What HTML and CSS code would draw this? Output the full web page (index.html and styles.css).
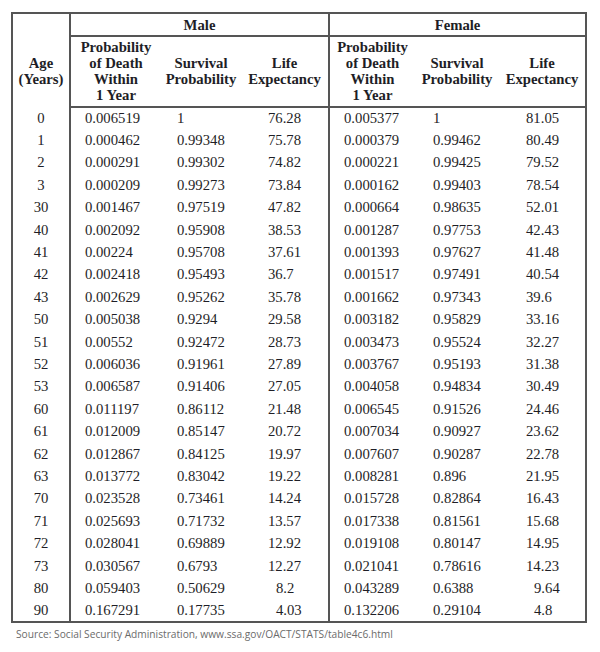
FILE: index.html
```html
<!DOCTYPE html>
<html lang="en">
<head>
<meta charset="utf-8">
<title>Life Table</title>
<link rel="stylesheet" href="styles.css">
</head>
<body>
<div class="page">
<table class="life">
<colgroup>
<col class="c-age"><col class="c-mp"><col class="c-ms"><col class="c-ml"><col class="c-fp"><col class="c-fs"><col class="c-fl">
</colgroup>
<thead>
<tr class="h1">
<th rowspan="2" class="age-h">Age<br>(Years)</th>
<th colspan="3" class="grp male-grp">Male</th>
<th colspan="3" class="grp">Female</th>
</tr>
<tr class="h2">
<th>Probability<br>of Death<br>Within<br>1 Year</th>
<th>Survival<br>Probability</th>
<th class="sep">Life<br>Expectancy</th>
<th>Probability<br>of Death<br>Within<br>1 Year</th>
<th>Survival<br>Probability</th>
<th>Life<br>Expectancy</th>
</tr>
</thead>
<tbody>
<tr><td class="age">0</td><td class="mp">0.006519</td><td class="ms">1</td><td class="ml">76.28</td><td class="fp">0.005377</td><td class="fs">1</td><td class="fl">81.05</td></tr>
<tr><td class="age">1</td><td class="mp">0.000462</td><td class="ms">0.99348</td><td class="ml">75.78</td><td class="fp">0.000379</td><td class="fs">0.99462</td><td class="fl">80.49</td></tr>
<tr><td class="age">2</td><td class="mp">0.000291</td><td class="ms">0.99302</td><td class="ml">74.82</td><td class="fp">0.000221</td><td class="fs">0.99425</td><td class="fl">79.52</td></tr>
<tr><td class="age">3</td><td class="mp">0.000209</td><td class="ms">0.99273</td><td class="ml">73.84</td><td class="fp">0.000162</td><td class="fs">0.99403</td><td class="fl">78.54</td></tr>
<tr><td class="age">30</td><td class="mp">0.001467</td><td class="ms">0.97519</td><td class="ml">47.82</td><td class="fp">0.000664</td><td class="fs">0.98635</td><td class="fl">52.01</td></tr>
<tr><td class="age">40</td><td class="mp">0.002092</td><td class="ms">0.95908</td><td class="ml">38.53</td><td class="fp">0.001287</td><td class="fs">0.97753</td><td class="fl">42.43</td></tr>
<tr><td class="age">41</td><td class="mp">0.00224</td><td class="ms">0.95708</td><td class="ml">37.61</td><td class="fp">0.001393</td><td class="fs">0.97627</td><td class="fl">41.48</td></tr>
<tr><td class="age">42</td><td class="mp">0.002418</td><td class="ms">0.95493</td><td class="ml">36.7</td><td class="fp">0.001517</td><td class="fs">0.97491</td><td class="fl">40.54</td></tr>
<tr><td class="age">43</td><td class="mp">0.002629</td><td class="ms">0.95262</td><td class="ml">35.78</td><td class="fp">0.001662</td><td class="fs">0.97343</td><td class="fl">39.6</td></tr>
<tr><td class="age">50</td><td class="mp">0.005038</td><td class="ms">0.9294</td><td class="ml">29.58</td><td class="fp">0.003182</td><td class="fs">0.95829</td><td class="fl">33.16</td></tr>
<tr><td class="age">51</td><td class="mp">0.00552</td><td class="ms">0.92472</td><td class="ml">28.73</td><td class="fp">0.003473</td><td class="fs">0.95524</td><td class="fl">32.27</td></tr>
<tr><td class="age">52</td><td class="mp">0.006036</td><td class="ms">0.91961</td><td class="ml">27.89</td><td class="fp">0.003767</td><td class="fs">0.95193</td><td class="fl">31.38</td></tr>
<tr><td class="age">53</td><td class="mp">0.006587</td><td class="ms">0.91406</td><td class="ml">27.05</td><td class="fp">0.004058</td><td class="fs">0.94834</td><td class="fl">30.49</td></tr>
<tr><td class="age">60</td><td class="mp">0.011197</td><td class="ms">0.86112</td><td class="ml">21.48</td><td class="fp">0.006545</td><td class="fs">0.91526</td><td class="fl">24.46</td></tr>
<tr><td class="age">61</td><td class="mp">0.012009</td><td class="ms">0.85147</td><td class="ml">20.72</td><td class="fp">0.007034</td><td class="fs">0.90927</td><td class="fl">23.62</td></tr>
<tr><td class="age">62</td><td class="mp">0.012867</td><td class="ms">0.84125</td><td class="ml">19.97</td><td class="fp">0.007607</td><td class="fs">0.90287</td><td class="fl">22.78</td></tr>
<tr><td class="age">63</td><td class="mp">0.013772</td><td class="ms">0.83042</td><td class="ml">19.22</td><td class="fp">0.008281</td><td class="fs">0.896</td><td class="fl">21.95</td></tr>
<tr><td class="age">70</td><td class="mp">0.023528</td><td class="ms">0.73461</td><td class="ml">14.24</td><td class="fp">0.015728</td><td class="fs">0.82864</td><td class="fl">16.43</td></tr>
<tr><td class="age">71</td><td class="mp">0.025693</td><td class="ms">0.71732</td><td class="ml">13.57</td><td class="fp">0.017338</td><td class="fs">0.81561</td><td class="fl">15.68</td></tr>
<tr><td class="age">72</td><td class="mp">0.028041</td><td class="ms">0.69889</td><td class="ml">12.92</td><td class="fp">0.019108</td><td class="fs">0.80147</td><td class="fl">14.95</td></tr>
<tr><td class="age">73</td><td class="mp">0.030567</td><td class="ms">0.6793</td><td class="ml">12.27</td><td class="fp">0.021041</td><td class="fs">0.78616</td><td class="fl">14.23</td></tr>
<tr><td class="age">80</td><td class="mp">0.059403</td><td class="ms">0.50629</td><td class="ml one">8.2</td><td class="fp">0.043289</td><td class="fs">0.6388</td><td class="fl one">9.64</td></tr>
<tr><td class="age">90</td><td class="mp">0.167291</td><td class="ms">0.17735</td><td class="ml one">4.03</td><td class="fp">0.132206</td><td class="fs">0.29104</td><td class="fl one">4.8</td></tr>
</tbody>
</table>
<p class="source">Source: Social Security Administration, www.ssa.gov/OACT/STATS/table4c6.html</p>
</div>
</body>
</html>
```
FILE: styles.css
```css
html, body {
  margin: 0;
  padding: 0;
  background: #fff;
}
.page {
  padding: 12px 0 0 11px;
}
.life {
  border-collapse: collapse;
  table-layout: fixed;
  width: 574px;
  border: 2px solid #555;
  font-family: "Liberation Serif", "Times New Roman", serif;
  font-size: 14.7px;
  color: #1e1e26;
}
.c-age { width: 58px; }
.c-mp { width: 91px; }
.c-ms { width: 80px; }
.c-ml { width: 88px; }
.c-fp { width: 86px; }
.c-fs { width: 84px; }
.c-fl { width: 87px; }

.life th {
  font-weight: bold;
  text-align: center;
  padding: 0;
  line-height: 15.8px;
}
.h1 th.grp {
  height: 19px;
  padding-top: 2px;
  border-bottom: 2px solid #555;
  vertical-align: middle;
}
.male-grp, .sep {
  border-right: 2px solid #555;
}
.age-h {
  border-right: 2px solid #555;
  vertical-align: bottom;
  padding-bottom: 19px !important;
}
.h2 th {
  height: 68px;
  vertical-align: middle;
  padding-top: 1px;
  border-bottom: 2px solid #555;
}
.life tbody tr {
  height: 22.4px;
}
.life td {
  padding: 0;
  line-height: 17px;
  white-space: nowrap;
  vertical-align: middle;
}
.life td.age {
  text-align: center;
  border-right: 2px solid #555;
}
.life td.mp { padding-left: 14px; }
.life td.ms { padding-left: 16px; }
.life td.ml { padding-left: 27px; border-right: 2px solid #555; }
.life td.fp { padding-left: 14px; }
.life td.fs { padding-left: 18px; }
.life td.fl { padding-left: 27px; }
.life td.one { padding-left: 35px; }
.life td.fl.one { padding-left: 35px; }

.source {
  margin: 4px 0 0 5px;
  font-family: "Open Sans", "Liberation Sans", sans-serif;
  font-size: 10.2px;
  line-height: 15px;
  color: #6b6b6b;
}
```
